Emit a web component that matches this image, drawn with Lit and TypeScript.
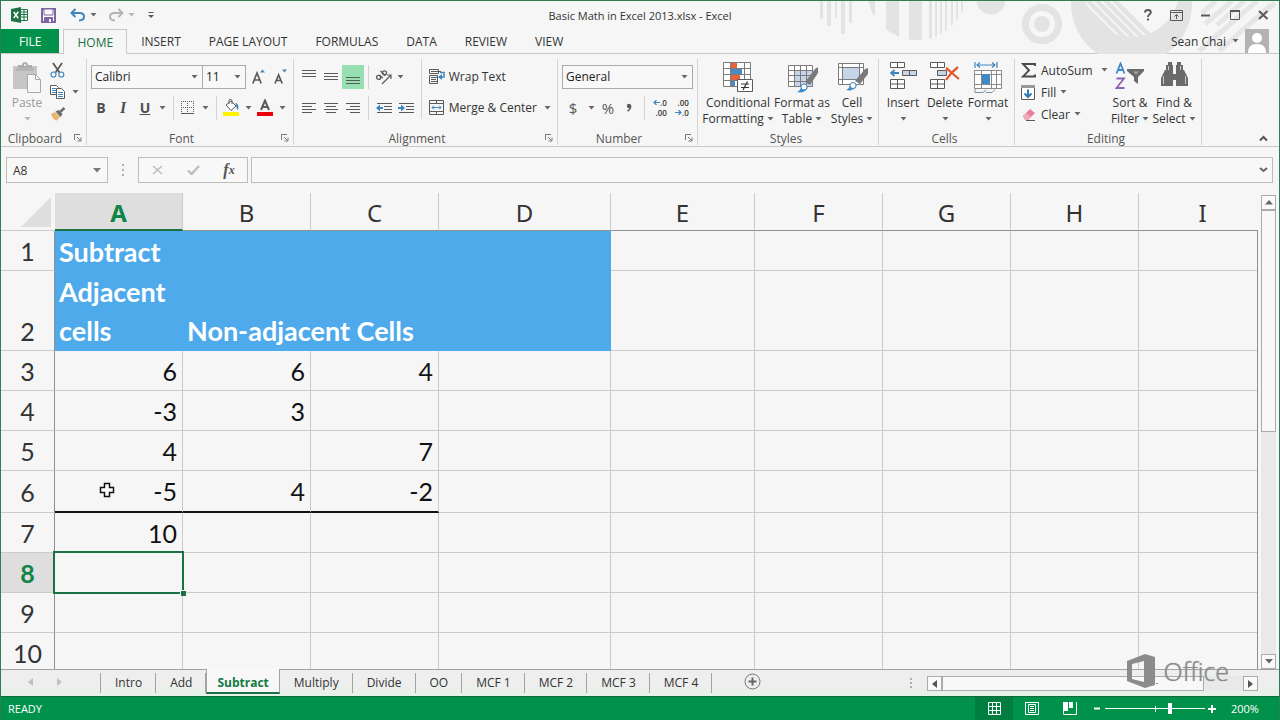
import { LitElement, html, css, svg, nothing } from "lit";
import { customElement, property, state } from "lit/decorators.js";
import { classMap } from "lit/directives/class-map.js";

const G = "#5a5a5a";
const B = "#3f86bd";

const icon = (w: number, h: number, body: unknown) =>
  html`<svg width=${w} height=${h} viewBox="0 0 ${w} ${h}" fill="none" aria-hidden="true">${body}</svg>`;

const arrow = (color = "#666") =>
  html`<svg class="arrow" width="7" height="4" viewBox="0 0 7 4" aria-hidden="true"><path d="M0.5 0h6L3.5 3.6z" fill=${color} /></svg>`;

const lines = (rows: number[][], w = 14, h = 14) =>
  icon(w, h, svg`<path stroke=${G} d=${rows.map(([x, y, l]) => `M${x} ${y + 0.5}h${l}`).join("")} />`);

const icons = {
  excel: icon(17, 16, svg`<path d="M9.500 2.500h7v11h-7z" fill="#fff" stroke="#1e7145"/><path d="M10 5h6M10 7.500h6M10 10h6M13 3v10" stroke="#1e7145"/><path d="M0 2l10-2v16L0 14z" fill="#1e7145"/><path d="M2.700 5l4.600 6.200M7.300 4.800L2.700 11" stroke="#fff" stroke-width="1.500"/>`),
  save: icon(15, 15, svg`<path d="M1 1h13v13H1z" fill="#fff" stroke="#8064a2" stroke-width="2"/><path d="M3 1h9v6H3z" fill="#f7f7f7" stroke="#8064a2"/><path d="M3 9h9v5H3z" fill="#8064a2"/><path d="M8 11h2v3H8z" fill="#fff"/>`),
  undo: icon(16, 14, svg`<path d="M5.500 1L1.500 5l4 4M2 5h7.500c3 0 4.500 1.500 4.500 3.600C14 11 12 12.500 9 12.500" stroke=${B} stroke-width="2"/>`),
  redo: icon(16, 14, svg`<path d="M10.500 1l4 4-4 4M14 5H6.500C3.500 5 2 6.500 2 8.600 2 11 4 12.500 7 12.500" stroke="#b5b5b5" stroke-width="2"/>`),
  custom: icon(7, 8, svg`<path d="M0.500 1.500h5" stroke=${G}/><path d="M0 4h6L3 7z" fill=${G}/>`),
  help: icon(8, 12, svg`<path d="M1 3.500C1 1.800 2.200 1 3.800 1 5.600 1 6.800 1.900 6.800 3.400 6.800 5.300 4 5.200 4 8M4 9.500v2" stroke=${G} stroke-width="2"/>`),
  ribbonOpt: icon(13, 11, svg`<path d="M.5.500h12v10H.500zM.5 2.500h12M6.500 9V5M4.500 6.500l2-2 2 2" stroke=${G}/>`),
  min: icon(10, 3, svg`<path d="M0 1.500h9" stroke=${G} stroke-width="2"/>`),
  max: icon(10, 10, svg`<path d="M.5 1.500h9v8H.500z" stroke=${G}/><path d="M0 1h10" stroke=${G} stroke-width="2"/>`),
  close: icon(11, 10, svg`<path d="M1 1l8.500 8M9.500 1L1 9" stroke=${G} stroke-width="2"/>`),
  avatar: icon(24, 24, svg`<path d="M0 0h24v24H0z" fill="#b3b3b3"/><circle cx="12" cy="9" r="5" fill="#fff"/><path d="M3 24c0-6 3-9 9-9s9 3 9 9z" fill="#fff"/>`),
  paste: icon(29, 31, svg`<path d="M0 4h24v23H0z" fill="#c6c6c6"/><path d="M5 3h4c0-4 6-4 6 0h4v4H5z" fill="#aeaeae"/><circle cx="12" cy="3" r="1" fill="#f5f5f5"/><path d="M3 6h18v3H3z" fill="#b5b5b5"/><path d="M14.500 12.500h8l5 5v13h-13z" fill="#f7f7f7" stroke="#a9a9a9"/><path d="M22.500 12.500v5h5" stroke="#a9a9a9"/>`),
  cut: icon(15, 16, svg`<path d="M3 1l6.500 9.500M12 1L5.500 10.500" stroke=${G} stroke-width="1.800"/><circle cx="3.500" cy="12.500" r="2.500" stroke=${B} stroke-width="1.200"/><circle cx="11.300" cy="12.500" r="2.500" stroke=${B} stroke-width="1.200"/>`),
  copy: icon(16, 14, svg`<path d="M.5.500h6l2 2v7h-8z" fill="#fff" stroke=${G}/><path d="M2 3.500h4M2 5.500h4M2 7.500h4" stroke=${B}/><path d="M6.500 3.500h5l3 3v7h-8z" fill="#fff" stroke=${G}/><path d="M8 7.500h5M8 9.500h5M8 11.500h5" stroke=${B}/>`),
  painter: icon(16, 14, svg`<path d="M1 7l4-2 5 5-3 3.500c-2 0-4-1-6-6.500z" fill="#e9b870"/><path d="M5.500 4.500l3-1.500 4 4-2 3z" fill="#6a6a6a"/><path d="M10 5l4.500-4" stroke="#6a6a6a" stroke-width="2.500"/>`),
  grow: icon(13, 16, svg`<path d="M.8 14.500L5 4 9.200 14.500M2.300 11h5.500" stroke=${G} stroke-width="1.700"/><path d="M8 3.500L10.500.500 13 3.500z" fill=${B}/>`),
  shrink: icon(13, 16, svg`<path d="M1 14.500L4.600 6 8.200 14.500M2.400 11.500h4.400" stroke=${G} stroke-width="1.700"/><path d="M8 .5h5L10.500 3.500z" fill=${B}/>`),
  borders: icon(14, 14, svg`<path d="M.5 0v14M6.500 0v14M12.500 0v14M0 .5h13M0 6.500h13" stroke=${G} stroke-dasharray="1 1"/><path d="M0 12.500h13" stroke=${G} stroke-width="1"/>`),
  bucket: icon(17, 17, svg`<path d="M0 13h16v4H0z" fill="#fff200"/><path d="M3 6l5-4 5 5-5 4.500z" fill="#fff" stroke=${G}/><path d="M6 5V1.500C6 0 9 0 9 2v3" stroke=${G}/><path d="M12 4c3 0 4 3 3 7-2-1-1-4-3-7z" fill=${B}/>`),
  fontColor: icon(16, 17, svg`<path d="M0 13h16v4H0z" fill="#e8000b"/><path d="M4 11L8 1.500 12 11M5.300 8h5.400" stroke=${G} stroke-width="2"/>`),
  orient: icon(17, 16, svg`<path d="M7 15L15.500 6.500M12 6h4v4" stroke=${G} stroke-width="1.200"/><g stroke=${G} stroke-width="1.300"><circle cx="3.600" cy="8.400" r="2"/><path d="M4.500 6l3.300 3.300M5.500 2l4.800 4.800"/><circle cx="9.500" cy="3.800" r="2"/></g>`),
  outdent: icon(17, 12, svg`<path d="M1 1.500h15M8 4.500h8M8 7.500h8M1 10.500h15" stroke=${G}/><path d="M0 6l4-3.500V5h3v2H4v2.500z" fill=${B}/>`),
  indent: icon(17, 12, svg`<path d="M1 1.500h15M8 4.500h8M8 7.500h8M1 10.500h15" stroke=${G}/><path d="M7 6L3 2.500V5H0v2h3v2.500z" fill=${B}/>`),
  wrap: icon(16, 16, svg`<path d="M.5.500h9v4h-9zM.5 6.500h8v8h-8zM2 2.500h10M2 8.500h6M2 10.500h5M2 12.500h6" stroke=${G}/><path d="M11 3.500h4v4.500h-3" stroke=${B} stroke-width="1.500"/><path d="M9 8l4-3v6z" fill=${B}/>`),
  merge: icon(16, 16, svg`<path d="M.5.500h14v14H.500zM.5 3.500h14M.5 11.500h14M7.500 0v4M7.500 11v4" stroke=${G}/><path d="M3 7.500h9M5 5.500l-2 2 2 2M10 5.500l2 2-2 2" stroke=${B}/>`),
  cond: icon(31, 31, svg`<path d="M.5.500h27v24H.500z" fill="#fff"/><path d="M8 1h6v5H8z" fill="#e8623a"/><path d="M8 7h11v5H8z" fill="#4a8cc2"/><path d="M8 13h9v5H8z" fill="#e8623a"/><path d="M8 19h4v6H8z" fill="#4a8cc2"/><path d="M.5.500h27v24H.500zM0 6.500h28M0 12.500h28M0 18.500h28M7.500 0v25M21.500 0v25" stroke="#7b7b7b"/><path d="M14.500 17.500h15v12h-15z" fill="#fff" stroke=${G}/><path d="M18 22h8M18 25.500h8M24.500 19.500L20 28" stroke="#333" stroke-width="1.200"/>`),
  fmtTable: icon(31, 31, svg`<path d="M1.500 3.500h24v21h-24z" fill="#fff"/><path d="M8 9h18v16H8z" fill="#c6d5ea"/><path d="M1.500 3.500h24v21h-24zM1 8.500h25M1 13.500h25M1 19.500h25M7.500 3v22M13.500 3v22M19.500 3v22" stroke="#7b7b7b"/><path d="M28 7l3-2v6l-8 12-5-3z" fill="#7a7a7a"/><path d="M10 30c3-1 3-3 5-6 3-3 7 0 5 3-2 3-6 4-10 3z" fill="#3f8ac6"/><circle cx="17" cy="25" r="3" fill="#fff" stroke="#3f8ac6"/>`),
  cellStyle: icon(31, 31, svg`<path d="M1.500 1.500h25v21h-25z" fill="#fff"/><path d="M5 6h18v12H5z" fill="#c6d5ea"/><path d="M1.500 1.500h25v21h-25zM1 5.500h26M1 17.500h26M5.500 1v22M22.500 1v22" stroke="#7b7b7b"/><path d="M28 7l3-1v6l-8 10-5-3z" fill="#7a7a7a"/><path d="M9 28c3-1 3-3 5-6 3-3 7 0 5 3-2 3-6 4-10 3z" fill="#3f8ac6"/><circle cx="16" cy="23.500" r="3" fill="#fff" stroke="#3f8ac6"/>`),
  insert: icon(27, 28, svg`<path d="M.5.500h14v5H.500zM7.500 0v6M.5 17.500h14v9H.500zM.5 22h14M7.500 17v10" fill="#fff" stroke=${G}/><path d="M12.500 8.500h14v5h-14zM19.500 8v6" fill="#c6d5ea" stroke=${G}/><path d="M1 11h8M4.500 8L1 11l3.500 3" stroke=${B} stroke-width="1.800"/>`),
  del: icon(30, 28, svg`<path d="M.5.500h14v5H.500zM7.500 0v6M.5 17.500h14v9H.500zM.5 22h14M7.500 17v10" fill="#fff" stroke=${G}/><path d="M7.500 8.500h9v5h-9z" fill="#c6d5ea" stroke=${G}/><path d="M16 6c4 3 8 7 13 11M28 5c-4 3-8 7-12 13" stroke="#e2582c" stroke-width="2.200"/>`),
  format: icon(29, 32, svg`<path d="M1 0v6M23 0v6M3 3h18M6 .5L3 3l3 2.500M18 .5L21 3l-3 2.500" stroke=${B} stroke-width="1.200"/><path d="M.5 8.500h27v18H.500z" fill="#fff"/><path d="M.5 8.500h27v18H.500zM0 12.500h28M0 22.500h28M7.500 8v19M17.500 8v19M22.500 8v19" stroke="#8b8b8b"/><path d="M8 12h8v10H8z" fill="#3f8ac6"/><path d="M1 27v3.500h8l3-2.500M12 30.500h6l3-3" stroke="#7b8fae"/>`),
  sum: icon(16, 15, svg`<path d="M14 3V1H2l6 6.300L2 13.500h12v-2" stroke="#4a4a4a" stroke-width="1.900"/>`),
  fill: icon(15, 15, svg`<path d="M.5.500h13v14H.500z" fill="#fff" stroke=${G}/><path d="M0 0h14v3H0z" fill="#9a9a9a"/><path d="M7 4.500V12M3.500 8.500L7 12l3.500-3.500" stroke="#2f78b7" stroke-width="2"/>`),
  clear: icon(16, 13, svg`<path d="M2 8l7-7 5 4-7 7H4z" fill="#e8809a"/><path d="M2 8l3-3 5 4-3 3H4z" fill="#f2a9b9"/><path d="M5 12.500h9" stroke=${G}/>`),
  sort: icon(30, 28, svg`<path d="M1.500 11.500L5.500 1.500 9.500 11.500M3 8h5" stroke="#3f8ac6" stroke-width="1.800"/><path d="M1.500 16.500h7.500L1.500 26h8" stroke="#8f62b3" stroke-width="1.800"/><path d="M12 7h17v2l-6 6v7l-4-3v-4l-7-6z" fill="#6a6a6a"/><path d="M18 9.500h6l-3 3z" fill="#a5a5a5"/>`),
  find: icon(27, 25, svg`<path d="M5 3h2V0h4v3h1v7H5zM15 3h1V0h4v3h2v7h-7zM4 8h8v16H0v-8zM15 8h8l4 8v8H15zM11 12h5v6h-5z" fill="#6a6a6a"/><path d="M2.500 14v8M24.500 14v8M7.500 4v4M19.500 4v4" stroke="#c9c9c9"/>`),
  launcher: icon(8, 8, svg`<path d="M.5 6V.5H6M3 3l3.500 3.500M7 3.500V7H3.500" stroke="#777"/>`),
  dollar: html`<span class="sym">$</span>`,
  percent: html`<span class="sym">%</span>`,
  comma: icon(6, 10, svg`<circle cx="3" cy="3" r="2.200" fill=${G}/><path d="M4.500 3c.5 2.500-1 4-3 5" stroke=${G} stroke-width="1.500"/>`),
  incDec: html`<span class="dec"><span>${icon(7, 5, svg`<path d="M7 2.500H1M3.500 0L1 2.500 3.500 5" stroke=${B} stroke-width="1.200"/>`)}.0</span><span>.00</span></span>`,
  decDec: html`<span class="dec"><span>.00</span><span>${icon(7, 5, svg`<path d="M0 2.500h6M3.500 0L6 2.500 3.500 5" stroke=${B} stroke-width="1.200"/>`)}.0</span></span>`,
};

const artwork = html`<svg class="art" width="480" height="53" viewBox="0 0 480 53" aria-hidden="true">
  <defs>
    <clipPath id="disc"><circle cx="118" cy="-11" r="50" /></clipPath>
    <clipPath id="hole"><circle cx="331" cy="0" r="46" /></clipPath>
  </defs>
  <g fill="#e3e3e3">
    <path d="M21 0h3v18h-3zM28 0h4v25h-4zM36 0h2v17h-2zM42 0h4v33h-4zM50 0h3v22h-3z" />
    <path clip-path="url(#disc)" d="M69 0h7v40h-7zM87 0h13v40H87zM110 0h13v40h-13zM130 0h3v40h-3zM136 0h2v40h-2zM141 0h2v40h-2zM146 0h2v40h-2zM152 0h2v40h-2zM157 0h2v40h-2zM162 0h2v40h-2zM166 0h2v40h-2z" />
    <circle cx="192" cy="-1" r="14.500" />
    <circle cx="243" cy="23" r="8" />
    <path fill-rule="evenodd" d="M272 0a61 61 0 0 0 27 53h68A61 61 0 0 0 393 0h-14a48 48 0 0 1-93 0z" />
  </g>
  <circle cx="243" cy="23" r="16.500" fill="none" stroke="#e3e3e3" stroke-width="7" />
  <g clip-path="url(#hole)" stroke="#e3e3e3" stroke-width="4.500">
    <path d="M272-8l66 66M281-8l66 66M290-8l66 66M299-8l66 66M308-8l66 66" />
  </g>
  <path stroke="#e6e6e6" stroke-width="5" d="M403 12l14-12M406 23l27-23M418 24l27-24M400 50l58-50M420 50l52-46M440 32l36-30" />
</svg>`;

const COLS = [
  { n: "A", w: 128 }, { n: "B", w: 128 }, { n: "C", w: 128 }, { n: "D", w: 172 }, { n: "E", w: 144 },
  { n: "F", w: 128 }, { n: "G", w: 128 }, { n: "H", w: 128 }, { n: "I", w: 128 },
];
const HEAD = 54;
const TABLE_WIDTH = COLS.reduce((sum, c) => sum + c.w, HEAD);
const DATA: Record<string, string> = {
  A1: "Subtract", A2: "Adjacent cells", B2: "Non-adjacent Cells",
  A3: "6", B3: "6", C3: "4", A4: "-3", B4: "3", A5: "4", C5: "7", A6: "-5", B6: "4", C6: "-2", A7: "10",
};
const ROWS = [1, 2, 3, 4, 5, 6, 7, 8, 9, 10];

const base = css`
  :host, * { box-sizing: border-box; }
  button, input, select { font: inherit; color: inherit; border: 0; background: none; padding: 0; margin: 0; border-radius: 0; outline: 0; }
  button { display: flex; align-items: center; justify-content: center; white-space: nowrap; }
  svg { display: block; flex: none; }
  a { color: inherit; text-decoration: none; }
`;

@customElement("xl-header")
class XlHeader extends LitElement {
  static styles = [base, css`
    :host { display: block; position: relative; background: #f6f6f6; border-bottom: 1px solid #c9c9c9; }
    .art { position: absolute; right: 0; top: 0; }
    .title { position: relative; display: grid; grid-template-columns: 1fr auto 1fr; align-items: center; height: 28px; font-size: 11px; color: #333; }
    .qat { display: flex; align-items: center; padding-left: 10px; }
    .app { margin-right: 13px; }
    .save { margin-right: 13px; }
    .split { width: 17px; height: 20px; }
    .split + .drop { margin: 0 8px 0 1px; }
    .drop { width: 12px; height: 20px; }
    .win { display: flex; justify-content: flex-end; padding-right: 1px; }
    .win button { width: 29px; height: 26px; }
    .tabs { position: relative; display: flex; height: 24px; align-items: stretch; font-size: 12px; color: #333; }
    .tabs nav { display: flex; flex: 1; }
    .tab { display: flex; align-items: center; padding: 0 14px; }
    .file { background: #00914b; color: #fff; padding: 0 18px; margin-right: 4px; }
    .home { color: #1a7343; background: #f6f6f6; border: 1px solid #c9c9c9; border-bottom: 0; padding: 0 13px; margin-bottom: -1px; position: relative; }
    .user { display: flex; align-items: center; gap: 6px; padding-right: 10px; }
  `];
  render() {
    return html`${artwork}
      <div class="title">
        <div class="qat">
          <span class="app">${icons.excel}</span>
          <button class="save" aria-label="Save">${icons.save}</button>
          <button class="split" aria-label="Undo">${icons.undo}</button><button class="drop" aria-label="Undo history">${arrow()}</button>
          <button class="split" aria-label="Redo">${icons.redo}</button><button class="drop" aria-label="Redo history">${arrow("#b5b5b5")}</button>
          <button class="drop" aria-label="Customize toolbar">${icons.custom}</button>
        </div>
        <span>Basic Math in Excel 2013.xlsx - Excel</span>
        <div class="win">
          <button aria-label="Help">${icons.help}</button>
          <button aria-label="Ribbon display options">${icons.ribbonOpt}</button>
          <button aria-label="Minimize">${icons.min}</button>
          <button aria-label="Maximize">${icons.max}</button>
          <button aria-label="Close">${icons.close}</button>
        </div>
      </div>
      <div class="tabs">
        <nav>
          <a class="tab file" href="#file">FILE</a>
          <a class="tab home" href="#home">HOME</a>
          ${["INSERT", "PAGE LAYOUT", "FORMULAS", "DATA", "REVIEW", "VIEW"].map((t) => html`<a class="tab" href="#${t}">${t}</a>`)}
        </nav>
        <button class="user"><span>Sean Chai</span>${arrow()}${icons.avatar}</button>
      </div>`;
  }
}

@customElement("xl-ribbon")
class XlRibbon extends LitElement {
  static styles = [base, css`
    :host { display: flex; height: 93px; padding-top: 5px; background: #f6f6f6; border-bottom: 1px solid #c9c9c9; font-size: 12px; color: #333; }
    section { display: flex; flex-direction: column; flex: none; height: 86px; border-right: 1px solid #d4d4d4; }
    .body { display: flex; flex: 1; }
    .cap { display: flex; align-items: center; height: 16px; color: #555; padding: 2px 4px 0 0; }
    .cap span { flex: 1; text-align: center; }
    .cap button { width: 8px; margin-left: 5px; }
    .clip { width: 86px; } .font { width: 207px; } .align { width: 264px; } .num { width: 140px; }
    .styles { width: 181px; } .cells { width: 136px; } .edit { width: 187px; }
    .stack { display: flex; flex-direction: column; padding-top: 2px; }
    .row { display: flex; align-items: center; height: 31px; }
    .row button { height: 24px; }
    .w14 { width: 14px; } .w18 { width: 18px; } .w20 { width: 20px; } .w22 { width: 22px; } .w24 { width: 24px; }
    .gap2 { gap: 2px; display: flex; }
    .sep { width: 1px; height: 24px; background: #d4d4d4; margin: 0 4px; }
    .tall { height: 60px; margin: 0 7px 0 4px; align-self: flex-start; }
    .on { background: #96dfb0; }
    .text { font-size: 12px; gap: 4px; }
    .glyph { font-size: 14px; font-weight: 700; color: #4f4f4f; }
    .it { font-style: italic; font-family: "Liberation Serif", serif; font-size: 16px; }
    .un { text-decoration: underline; }
    .sym { font-size: 15px; color: #5a5a5a; }
    .dec { display: flex; flex-direction: column; align-items: flex-end; font-size: 8px; line-height: 10px; color: #333; font-weight: 600; }
    .dec span { display: flex; align-items: center; }
    .combo { display: grid; align-items: center; height: 24px; border: 1px solid #ababab; background: #f8f8f8; }
    .combo > * { grid-area: 1 / 1; }
    .combo select { appearance: none; width: 100%; height: 22px; padding-left: 3px; font-size: 12px; color: #222; }
    .combo .arrow { justify-self: end; margin-right: 4px; pointer-events: none; }
    .face { width: 112px; } .size { width: 44px; margin-left: -1px; } .fmt { width: 131px; }
    .big { flex-direction: column; justify-content: flex-start; line-height: 16px; font-size: 12px; white-space: nowrap; }
    .big .pic { display: flex; height: 36px; align-items: flex-start; padding-top: 3px; }
    .big .ln { display: flex; align-items: center; gap: 3px; height: 16px; }
    .off { color: #9a9a9a; }
    .small { display: flex; flex-direction: column; }
    .clip .small { padding-left: 2px; }
    .small button { height: 22px; justify-content: flex-start; }
    .smallrow { display: flex; }
    .sums button { gap: 4px; font-size: 12px; }
    .sums .pic { display: flex; width: 16px; }
    .wide { width: 80px; }
    .spacer { flex: 1; }
    .collapse { align-self: flex-end; margin: 0 11px 4px 0; }
    .pad4 { padding-left: 4px; } .pad5 { padding-left: 5px; } .pad6 { padding-left: 6px; }
  `];
  big(w: number, pic: unknown, a: string, b = "", cls = "") {
    return html`<button class="big ${cls}" style="width:${w}px">
      <span class="pic">${pic}</span><span class="ln">${a}</span>
      <span class="ln">${b ? b : nothing}${arrow(cls ? "#b5b5b5" : "#666")}</span></button>`;
  }
  cap(t: string, launch = true) {
    return html`<div class="cap"><span>${t}</span>${launch ? html`<button aria-label="${t} settings">${icons.launcher}</button>` : nothing}</div>`;
  }
  btn(cls: string, label: string, c: unknown) {
    return html`<button class=${cls} aria-label=${label}>${c}</button>`;
  }
  render() {
    return html`
      <section class="clip"><div class="body pad5">
        ${this.big(42, icons.paste, "Paste", "", "off")}
        <div class="small">
          ${this.btn("w18", "Cut", icons.cut)}
          <div class="smallrow">${this.btn("w22", "Copy", icons.copy)}${this.btn("", "Copy options", arrow())}</div>
          ${this.btn("w18", "Format painter", icons.painter)}
        </div></div>${this.cap("Clipboard")}</section>

      <section class="font"><div class="body stack pad4">
        <div class="row">
          <label class="combo face"><select aria-label="Font"><option>Calibri</option></select>${arrow()}</label>
          <label class="combo size"><select aria-label="Font size"><option>11</option></select>${arrow()}</label>
          ${this.btn("w24", "Increase font size", icons.grow)}${this.btn("w20", "Decrease font size", icons.shrink)}
        </div>
        <div class="row">
          <div class="gap2">${this.btn("w20 glyph", "Bold", "B")}${this.btn("w20 glyph it", "Italic", "I")}${this.btn("w20 glyph un", "Underline", "U")}</div>
          ${this.btn("w14", "Underline styles", arrow())}
          <span class="sep"></span>
          ${this.btn("w20", "Borders", icons.borders)}${this.btn("w14", "Border styles", arrow())}
          <span class="sep"></span>
          ${this.btn("w20", "Fill color", icons.bucket)}${this.btn("w14", "Fill colors", arrow())}
          ${this.btn("w20", "Font color", icons.fontColor)}${this.btn("w14", "Font colors", arrow())}
        </div></div>${this.cap("Font")}</section>

      <section class="align"><div class="body pad4">
        <div class="stack">
          <div class="row">
            ${this.btn("w22", "Top align", lines([[0, 0, 14], [0, 3, 14], [0, 6, 14]]))}
            ${this.btn("w22", "Middle align", lines([[0, 3, 14], [0, 6, 14], [0, 9, 14]]))}
            ${this.btn("w22 on", "Bottom align", lines([[0, 7, 14], [0, 10, 14], [0, 13, 14]]))}
            <span class="sep"></span>
            ${this.btn("w20", "Orientation", icons.orient)}${this.btn("w14", "Orientations", arrow())}
          </div>
          <div class="row">
            ${this.btn("w22", "Align left", lines([[0, 2, 14], [0, 5, 10], [0, 8, 14], [0, 11, 10]]))}
            ${this.btn("w22", "Center", lines([[0, 2, 14], [2, 5, 10], [0, 8, 14], [2, 11, 10]]))}
            ${this.btn("w22", "Align right", lines([[0, 2, 14], [4, 5, 10], [0, 8, 14], [4, 11, 10]]))}
            <span class="sep"></span>
            ${this.btn("w22", "Decrease indent", icons.outdent)}${this.btn("w22", "Increase indent", icons.indent)}
          </div>
        </div>
        <span class="sep tall"></span>
        <div class="stack">
          <div class="row"><button class="text">${icons.wrap}Wrap Text</button></div>
          <div class="row"><button class="text">${icons.merge}Merge &amp; Center</button>${this.btn("w20", "Merge options", arrow())}</div>
        </div></div>${this.cap("Alignment")}</section>

      <section class="num"><div class="body stack pad4">
        <div class="row"><label class="combo fmt"><select aria-label="Number format"><option>General</option></select>${arrow()}</label></div>
        <div class="row">
          ${this.btn("w22", "Currency", icons.dollar)}${this.btn("w14", "Currencies", arrow())}
          ${this.btn("w20", "Percent", icons.percent)}${this.btn("w22", "Comma style", icons.comma)}
          <span class="sep"></span>
          ${this.btn("w22", "Increase decimal", icons.incDec)}${this.btn("w22", "Decrease decimal", icons.decDec)}
        </div></div>${this.cap("Number")}</section>

      <section class="styles"><div class="body pad5">
        ${this.big(70, icons.cond, "Conditional", "Formatting")}
        ${this.big(58, icons.fmtTable, "Format as", "Table")}
        ${this.big(42, icons.cellStyle, "Cell", "Styles")}
      </div>${this.cap("Styles", false)}</section>

      <section class="cells"><div class="body pad4">
        ${this.big(40, icons.insert, "Insert")}${this.big(44, icons.del, "Delete")}${this.big(42, icons.format, "Format")}
      </div>${this.cap("Cells", false)}</section>

      <section class="edit"><div class="body pad6">
        <div class="small sums">
          <div class="smallrow"><button class="wide"><span class="pic">${icons.sum}</span>AutoSum</button>${this.btn("", "AutoSum options", arrow())}</div>
          <button><span class="pic">${icons.fill}</span>Fill ${arrow()}</button>
          <button><span class="pic">${icons.clear}</span>Clear ${arrow()}</button>
        </div>
        ${this.big(44, icons.sort, "Sort &", "Filter")}${this.big(44, icons.find, "Find &", "Select")}
      </div>${this.cap("Editing", false)}</section>
      <span class="spacer"></span>
      <button class="collapse" aria-label="Collapse ribbon">${icon(9, 7, svg`<path d="M1 5.500l3.500-3.500L8 5.500" stroke="#555" stroke-width="2"/>`)}</button>`;
  }
}

@customElement("xl-formula")
class XlFormula extends LitElement {
  static styles = [base, css`
    :host { display: flex; align-items: center; height: 46px; padding: 0 6px 0 5px; background: #f6f6f6; font-size: 12px; color: #333; }
    .box { display: flex; align-items: center; height: 26px; border: 1px solid #bdbdbd; background: #f8f8f8; }
    .name { width: 102px; padding-right: 5px; }
    .name input { flex: 1; min-width: 0; padding-left: 6px; }
    .dots { width: 30px; display: flex; justify-content: center; }
    .tools { width: 110px; margin-right: 3px; }
    .tools button { flex: 1; }
    .entry { flex: 1; padding-right: 4px; }
    .entry input { flex: 1; padding-left: 6px; }
    .fx { font-family: "Liberation Serif", serif; font-style: italic; font-size: 16px; font-weight: 700; color: #555; }
    .fx small { font-size: 12px; }
  `];
  render() {
    return html`
      <div class="box name"><input aria-label="Name box" .value=${"A8"} /><button aria-label="Named ranges"><svg width="10" height="5" viewBox="0 0 10 5"><path d="M1 0h8L5 4.500z" fill="#777" /></svg></button></div>
      <span class="dots">${icon(2, 12, svg`<path d="M1 0v12" stroke="#999" stroke-width="1.500" stroke-dasharray="2 3"/>`)}</span>
      <div class="box tools">
        <button aria-label="Cancel">${icon(11, 10, svg`<path d="M1 1l9 8M10 1L1 9" stroke="#bdbdbd" stroke-width="1.600"/>`)}</button>
        <button aria-label="Enter">${icon(13, 10, svg`<path d="M1 5.500L4.500 9 12 1" stroke="#bdbdbd" stroke-width="2.400"/>`)}</button>
        <button class="fx" aria-label="Insert function">f<small>x</small></button>
      </div>
      <div class="box entry"><input aria-label="Formula bar" /><button aria-label="Expand formula bar">${icon(9, 6, svg`<path d="M1 1l3.500 3L8 1" stroke="#666" stroke-width="2"/>`)}</button></div>`;
  }
}

@customElement("xl-grid")
class XlGrid extends LitElement {
  @property() active = "A8";
  static styles = [base, css`
    :host { display: flex; flex: 1; min-height: 0; background: #f6f6f6; border-bottom: 1px solid #a3a3a3; }
    .view { flex: 1; min-width: 0; overflow: hidden; display: flex; position: relative; }
    .edge { position: absolute; right: 0; top: 37px; bottom: 0; width: 1px; background: #8f8f8f; }
    table { table-layout: fixed; border-collapse: separate; border-spacing: 0; flex: none; align-self: flex-start; font-family: Lato, sans-serif; font-size: 25px; line-height: 37px; color: #111; }
    th, td { padding: 0; border: solid #cbcbcb; border-width: 0 1px 1px 0; font-weight: 400; vertical-align: bottom; }
    thead th { height: 38px; padding-top: 3px; line-height: 34px; border-bottom-color: #8f8f8f; color: #333; font-family: "Noto Sans", sans-serif; font-size: 24px; }
    thead .corner { border-color: #f6f6f6 #f6f6f6 #cbcbcb; }
    .corner svg { margin: 0 3px 3px auto; }
    tbody th { border-right-color: #8f8f8f; color: #333; }
    td { padding: 0 5px; }
    .r { height: 40px; }
    .r2 { height: 80px; }
    .r6 { height: 42px; line-height: 39px; }
    .num { text-align: right; }
    .band { background: #4eaaea; border-color: #4eaaea; color: #fff; font-size: 27px; font-weight: 700; white-space: nowrap; padding: 0 0 0 4px; }
    .r2 .band { line-height: 39px; }
    .r2 .wrap { white-space: normal; }
    .rule { border-bottom: 2px solid #111; }
    thead .sel, tbody .sel { background: #dedede; color: #0f8547; font-weight: 700; }
    thead .sel { border-bottom: 2px solid #1b7044; line-height: 33px; }
    .here { position: relative; }
    .here i { position: absolute; inset: -2px; border: 2px solid #1b7044; }
    .here b { position: absolute; right: -4px; bottom: -4px; width: 6px; height: 6px; background: #1b7044; border: solid #f6f6f6; border-width: 1px 0 0 1px; }
    .cross { position: absolute; left: 98px; top: 289px; }
    .bar { width: 21px; padding: 2px 3px 0; display: flex; flex-direction: column; background: #f6f6f6; }
    .bar button { height: 15px; border: 1px solid #ababab; background: #fafafa; }
    .track { flex: 1; background: #e9e9e9; display: flex; flex-direction: column; }
    .thumb { height: 50%; border: 1px solid #ababab; background: #f8f8f8; }
  `];
  cell(c: string, r: number) {
    const key = c + r;
    const t = DATA[key] ?? "";
    const band = r < 3 && "ABCD".includes(c);
    const cls = classMap({
      band, wrap: key === "A2", num: !band && !!t,
      rule: r === 6 && "ABC".includes(c), here: key === this.active,
    });
    return html`<td class=${cls}>${t}${key === this.active ? html`<i></i><b></b>` : nothing}</td>`;
  }
  render() {
    const col = this.active[0];
    const row = Number(this.active.slice(1));
    return html`
      <div class="view">
        <table style="width:${TABLE_WIDTH}px">
          <colgroup><col style="width:${HEAD}px" />${COLS.map((c) => html`<col style="width:${c.w}px" />`)}</colgroup>
          <thead><tr>
            <th class="corner">${icon(30, 30, svg`<path d="M30 0v30H0z" fill="#dedede"/>`)}</th>
            ${COLS.map((c) => html`<th scope="col" class=${classMap({ sel: c.n === col })}>${c.n}</th>`)}
          </tr></thead>
          <tbody>${ROWS.map((r) => html`<tr class="r r${r}">
            <th scope="row" class=${classMap({ sel: r === row })}>${r}</th>${COLS.map((c) => this.cell(c.n, r))}</tr>`)}</tbody>
        </table>
        <span class="edge"></span>
        <svg class="cross" width="17" height="17" viewBox="0 0 17 17" aria-hidden="true"><path d="M5.500 1.500h5v4h4v5h-4v4h-5v-4h-4v-5h4z" fill="#fff" stroke="#111" stroke-width="1.500" /></svg>
      </div>
      <div class="bar">
        <button aria-label="Scroll up">${icon(8, 5, svg`<path d="M0 4.500h8L4 0z" fill="#666"/>`)}</button>
        <div class="track"><div class="thumb"></div></div>
        <button aria-label="Scroll down">${icon(8, 5, svg`<path d="M0 0h8L4 4.500z" fill="#666"/>`)}</button>
      </div>`;
  }
}

@customElement("xl-footer")
class XlFooter extends LitElement {
  @state() zoom = 66;
  static styles = [base, css`
    :host { display: block; position: relative; font-size: 12px; color: #333; }
    .sheets { display: flex; height: 27px; background: linear-gradient(#eeeeee 50%, #e5f2e8); border-bottom: 1px solid #0b6b3a; }
    .nav { width: 99px; display: flex; align-items: center; gap: 24px; padding: 0 0 2px 27px; }
    .tabs { display: flex; }
    .tabs button { height: 24px; padding: 0 14px; position: relative; }
    .tabs button::after { content: ""; position: absolute; right: 0; top: 3px; width: 1px; height: 20px; background: #a3a3a3; }
    .tabs .lead { width: 1px; height: 20px; margin-top: 3px; background: #a3a3a3; }
    .tabs .cur { background: #f8f8f8; border: 1px solid #a3a3a3; border-width: 0 1px 2px; border-bottom-color: #1b7044; color: #137a43; font-weight: 700; margin-top: -1px; height: 25px; padding: 3px 10px 0; }
    .tabs .cur::after { display: none; }
    .add { width: 18px; margin: 0 0 3px 31px; }
    .spacer { flex: 1; }
    .dots { align-self: center; margin-right: 15px; }
    .hbar { display: flex; width: 331px; height: 15px; margin: 6px 21px 0 0; background: #e9e9e9; }
    .hbar button { width: 15px; border: 1px solid #ababab; background: #fafafa; }
    .track { flex: 1; }
    .thumb { width: 87%; height: 15px; border: 1px solid #ababab; background: #f8f8f8; }
    .status { display: flex; align-items: center; height: 23px; background: #00914b; color: #fff; font-size: 11px; padding: 0 18px 0 7px; }
    .views { display: flex; margin-right: 4px; }
    .views button { width: 38px; height: 23px; }
    .views .cur { background: #007d40; }
    .step { width: 8px; height: 20px; }
    input[type="range"] { appearance: none; width: 100px; height: 12px; margin: 0 3px 0 4px; background: linear-gradient(#fff, #fff) 50% 50% / 1px 6px no-repeat, linear-gradient(#fff, #fff) 50% 50% / 100% 1px no-repeat; }
    input[type="range"]::-webkit-slider-thumb { appearance: none; width: 4px; height: 11px; background: #fff; }
    .pct { width: 30px; margin-left: 15px; }
    .brand { position: absolute; right: 50px; top: -17px; display: flex; align-items: center; gap: 6px; color: #8b8b8b; font-size: 25px; line-height: 36px; font-weight: 300; }
    .brand span { text-shadow: 0 0 1px #8b8b8b; }
  `];
  render() {
    return html`
      <div class="sheets">
        <div class="nav">
          <button aria-label="Previous sheet">${icon(5, 8, svg`<path d="M5 0v8L0 4z" fill="#c0c0c0"/>`)}</button>
          <button aria-label="Next sheet">${icon(5, 8, svg`<path d="M0 0v8l5-4z" fill="#c0c0c0"/>`)}</button>
        </div>
        <div class="tabs"><span class="lead"></span>
          ${["Intro", "Add", "Subtract", "Multiply", "Divide", "OO", "MCF 1", "MCF 2", "MCF 3", "MCF 4"].map(
            (t) => html`<button class=${classMap({ cur: t === "Subtract" })}>${t}</button>`)}
        </div>
        <button class="add" aria-label="New sheet">${icon(17, 17, svg`<circle cx="8.500" cy="8.500" r="7.500" stroke="#777"/><path d="M4.500 8.500h8M8.500 4.500v8" stroke="#666" stroke-width="2"/>`)}</button>
        <span class="spacer"></span>
        <span class="dots">${icon(2, 12, svg`<path d="M1 1v10" stroke="#999" stroke-width="1.500" stroke-dasharray="2 2"/>`)}</span>
        <div class="hbar">
          <button aria-label="Scroll left">${icon(5, 8, svg`<path d="M5 0v8L0 4z" fill="#555"/>`)}</button>
          <div class="track"><div class="thumb"></div></div>
          <button aria-label="Scroll right">${icon(5, 8, svg`<path d="M0 0v8l5-4z" fill="#555"/>`)}</button>
        </div>
      </div>
      <div class="status">
        <span>READY</span><span class="spacer"></span>
        <div class="views">
          <button class="cur" aria-label="Normal">${icon(13, 13, svg`<path d="M.5.500h12v12H.500zM.5 4.500h12M.5 8.500h12M4.500 0v13M8.500 0v13" stroke="#fff"/>`)}</button>
          <button aria-label="Page layout">${icon(14, 13, svg`<path d="M.5.500h13v12H.500zM3.500 2.500h7v8h-7zM5 4.500h4M5 6.500h4M5 8.500h4" stroke="#fff"/>`)}</button>
          <button aria-label="Page break preview">${icon(14, 13, svg`<path d="M13.500 0v12.500H.500" stroke="#fff"/><path d="M0 0h5v9H0zM6 0h4v6H6z" fill="#fff"/><path d="M.5 8v4" stroke="#fff"/>`)}</button>
        </div>
        <button class="step" aria-label="Zoom out">${icon(7, 7, svg`<path d="M0 3.500h6" stroke="#fff" stroke-width="2"/>`)}</button>
        <input type="range" aria-label="Zoom" min="0" max="100" .value=${String(this.zoom)} @input=${(e: Event) => (this.zoom = Number((e.target as HTMLInputElement).value))} />
        <button class="step" aria-label="Zoom in">${icon(8, 8, svg`<path d="M0 4h8M4 0v8" stroke="#fff" stroke-width="2"/>`)}</button>
        <span class="pct">200%</span>
      </div>
      <div class="brand">
        ${icon(31, 34, svg`<path fill-rule="evenodd" d="M0 7L18 0l10 3v28l-10 3L0 27zM5 10v15l12 3V7z" fill="#8b8b8b"/><path d="M29 29.500h2" stroke="#8b8b8b"/>`)}
        <span>Office</span>
      </div>`;
  }
}

@customElement("app-root")
class AppRoot extends LitElement {
  static styles = css`
    :host { display: flex; flex-direction: column; height: 100vh; box-sizing: border-box; border: solid #2f7d52; border-width: 1px 1px 0; overflow: hidden; background: #f6f6f6; font-family: "Open Sans", "Noto Sans", sans-serif; }
  `;
  render() {
    return html`<xl-header></xl-header><xl-ribbon></xl-ribbon><xl-formula></xl-formula><xl-grid></xl-grid><xl-footer></xl-footer>`;
  }
}
